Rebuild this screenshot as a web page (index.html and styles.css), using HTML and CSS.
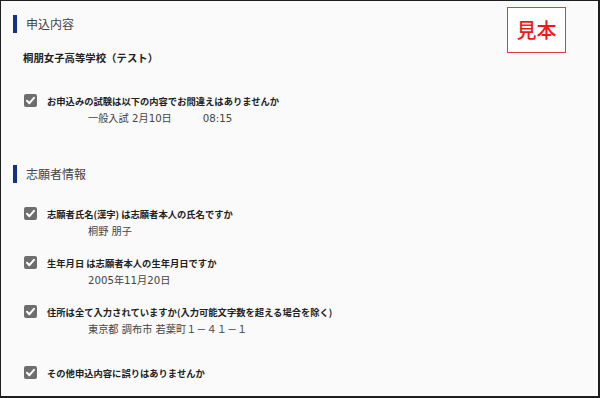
FILE: index.html
```html
<!DOCTYPE html>
<html lang="ja">
<head>
<meta charset="utf-8">
<title>申込内容</title>
<link rel="stylesheet" href="styles.css">
</head>
<body>
<div class="frame">
  <div class="stamp">見本</div>

  <section class="section">
    <h2 class="sec-title">申込内容</h2>
    <p class="school">桐朋女子高等学校（テスト）</p>
    <div class="item first">
      <div class="question"><span class="cb"><svg viewBox="0 0 13 13" width="13" height="13"><path d="M3 6.8 L5.4 9.2 L10 3.8" fill="none" stroke="#fff" stroke-width="2" stroke-linecap="round" stroke-linejoin="round"/></svg></span>お申込みの試験は以下の内容でお間違えはありませんか</div>
      <div class="detail">一般入試 2月10日<span class="time">08:15</span></div>
    </div>
  </section>

  <section class="section second">
    <h2 class="sec-title">志願者情報</h2>
    <div class="item first-b">
      <div class="question"><span class="cb"><svg viewBox="0 0 13 13" width="13" height="13"><path d="M3 6.8 L5.4 9.2 L10 3.8" fill="none" stroke="#fff" stroke-width="2" stroke-linecap="round" stroke-linejoin="round"/></svg></span>志願者氏名(漢字) は志願者本人の氏名ですか</div>
      <div class="detail">桐野 朋子</div>
    </div>
    <div class="item">
      <div class="question"><span class="cb"><svg viewBox="0 0 13 13" width="13" height="13"><path d="M3 6.8 L5.4 9.2 L10 3.8" fill="none" stroke="#fff" stroke-width="2" stroke-linecap="round" stroke-linejoin="round"/></svg></span>生年月日 は志願者本人の生年月日ですか</div>
      <div class="detail">2005年11月20日</div>
    </div>
    <div class="item">
      <div class="question"><span class="cb"><svg viewBox="0 0 13 13" width="13" height="13"><path d="M3 6.8 L5.4 9.2 L10 3.8" fill="none" stroke="#fff" stroke-width="2" stroke-linecap="round" stroke-linejoin="round"/></svg></span>住所は全て入力されていますか(入力可能文字数を超える場合を除く)</div>
      <div class="detail">東京都 調布市 若葉町１－４１－１</div>
    </div>
    <div class="item last">
      <div class="question"><span class="cb"><svg viewBox="0 0 13 13" width="13" height="13"><path d="M3 6.8 L5.4 9.2 L10 3.8" fill="none" stroke="#fff" stroke-width="2" stroke-linecap="round" stroke-linejoin="round"/></svg></span>その他申込内容に誤りはありませんか</div>
    </div>
  </section>
</div>
</body>
</html>
```

FILE: styles.css
```css
html, body {
  margin: 0;
  padding: 0;
}
body {
  width: 600px;
  height: 398px;
  background: #fafafa;
  font-family: "Noto Sans CJK JP", "Noto Sans", sans-serif;
  color: #333;
}
.frame {
  position: relative;
  box-sizing: border-box;
  width: 600px;
  height: 398px;
  border-style: solid;
  border-color: #1e1e1e;
  border-width: 1px 2px 2px 1px;
  padding: 14px 0 0 12px;
  overflow: hidden;
}
.stamp {
  position: absolute;
  left: 506px;
  top: 6px;
  width: 57px;
  height: 44px;
  border: 1px solid #e83a3a;
  background: #fff;
  color: #f01818;
  font-size: 20px;
  font-weight: 500;
  line-height: 44px;
  text-align: center;
}
.section { margin: 0; }
.second { margin-top: 37px; }
.sec-title {
  margin: 0;
  height: 18px;
  border-left: 4px solid #13308a;
  padding-left: 9px;
  font-size: 12px;
  font-weight: normal;
  line-height: 18px;
  color: #444;
}
.school {
  margin: 16px 0 0 10px;
  font-size: 10.4px;
  font-weight: bold;
  line-height: 18px;
  color: #222;
}
.item { margin-top: 12px; padding-left: 11px; }
.item.first { margin-top: 24px; }
.item.first-b { margin-top: 21px; }
.item.last { margin-top: 24px; }
.question {
  display: flex;
  align-items: center;
  height: 19px;
  font-size: 9.3px;
  font-weight: bold;
  color: #222;
  white-space: nowrap;
}
.cb {
  display: inline-flex;
  width: 13px;
  height: 13px;
  border-radius: 2px;
  background: #6e6e6e;
  margin-right: 10px;
  flex: none;
}
.detail {
  height: 18px;
  line-height: 18px;
  padding-left: 64px;
  font-family: "DejaVu Sans", "Noto Sans CJK JP", sans-serif;
  font-size: 10.2px;
  color: #444;
  white-space: nowrap;
}
.time { margin-left: 31px; }
```
